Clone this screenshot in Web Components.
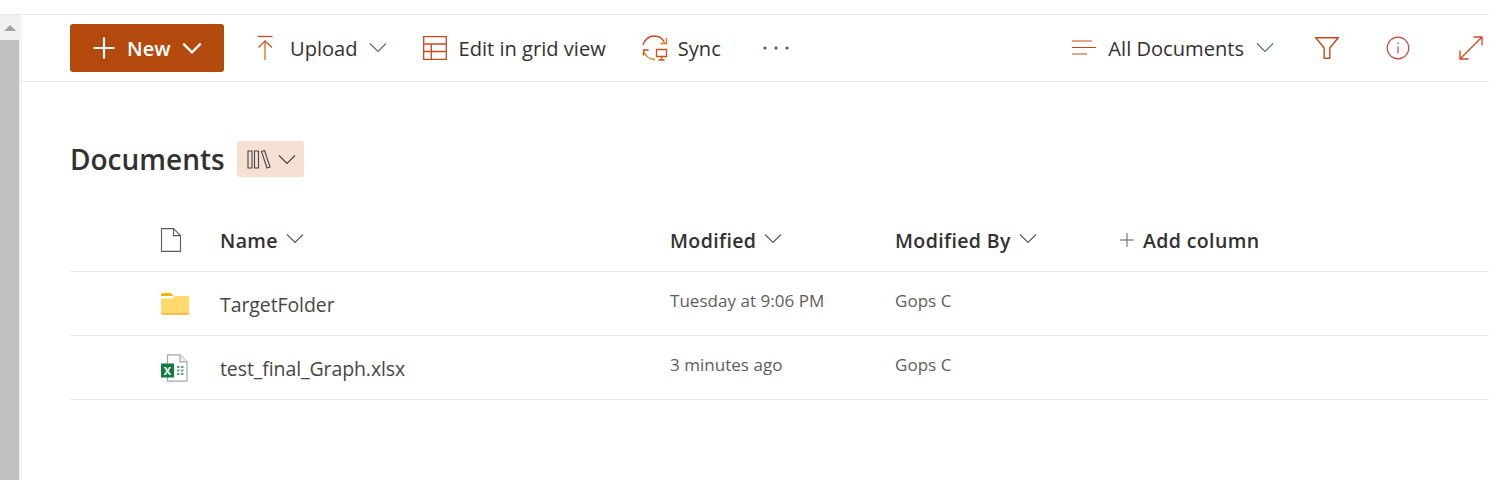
<!DOCTYPE html>
<html>
<head>
<meta charset="utf-8">
<title>Documents</title>
<style>
    html, body { margin: 0; height: 100%; overflow: hidden; background: #fff; }
    body { font-family: "Open Sans", "Noto Sans", sans-serif; color: #323130; }
</style>
</head>
<body>
<sp-app></sp-app>
<script>
const chevron = (w, color) => `<svg width="${w}" height="${Math.round(w * 0.6)}" viewBox="0 0 18 11" fill="none" stroke="${color}" stroke-width="1.2"><path d="M1 1.5 9 9.5 17 1.5"/></svg>`;

const icons = {
    plus: `<svg width="24" height="24" viewBox="0 0 24 24" stroke="#fff" stroke-width="2.2"><path d="M12 1.5v21M1.5 12h21"/></svg>`,
    upload: `<svg width="18" height="26" viewBox="0 0 18 26" fill="none"><path d="M2 1.5h14.5" stroke="#c8461c" stroke-width="1.3"/><path d="M9 25V6" stroke="#dc7a1e" stroke-width="1.4"/><path d="M2.5 12.5 9.2 5.8l6.7 6.7" stroke="#c8521c" stroke-width="1.3"/></svg>`,
    grid: `<svg width="24" height="24" viewBox="0 0 24 24" fill="none" stroke="#c8481c" stroke-width="1.3"><path d="M.7.7h22.6v22.6H.7zM.7 8h22.6M.7 15.5h22.6M8.3 8v15.3"/></svg>`,
    sync: `<svg width="26" height="26" viewBox="0 0 26 26" fill="none" stroke-width="1.3"><path d="M1 10C3 4.500 7.500 1 12.500 1c4.500 0 8 2.200 10 6.500" stroke="#c8481c"/><path d="M24.500 3v5.500H18.500" stroke="#dc7a1e"/><path d="M6.500 15H1.500v5.500" stroke="#c8481c"/><path d="M1.500 15.500C3 21 7.500 24.500 13 24.500" stroke="#dc7a1e"/><path d="M14.500 14.500h10v7h-10zM19.500 21.500v3.500M16.500 25h6" stroke="#c8521c"/></svg>`,
    more: `<svg width="26" height="6" viewBox="0 0 26 6" fill="#44546a"><circle cx="2" cy="3" r="1.500"/><circle cx="13" cy="3" r="1.500"/><circle cx="24" cy="3" r="1.500"/></svg>`,
    view: `<svg width="24" height="16" viewBox="0 0 24 16" fill="none" stroke="#c8481c" stroke-width="1.2"><path d="M0 1h20M0 7.500h24M0 14h15"/></svg>`,
    filter: `<svg width="24" height="22" viewBox="0 0 24 22" fill="none" stroke="#c8481c" stroke-width="1.4"><path d="M.8.8h22.400L14.800 11v10.200H9.200V11z"/></svg>`,
    info: `<svg width="24" height="24" viewBox="0 0 24 24" fill="none" stroke="#c8483c" stroke-width="1.2"><circle cx="12" cy="12" r="10.800"/><path d="M12 10.500v7M12 6.500v1.800" stroke="#d04a6a" stroke-width="1.300"/></svg>`,
    expand: `<svg width="24" height="24" viewBox="0 0 24 24" fill="none" stroke="#c8481c" stroke-width="1.300"><path d="M1 23 23 1M14.500 1H23v8.500M1 14.500V23h8.500"/></svg>`,
    library: `<svg width="24" height="19" viewBox="0 0 24 19" fill="none" stroke="#4a4644" stroke-width="1.100"><path d="M1 1h4v17H1zM7.500 1h4v17h-4zM14.500 1.500 17.500.5l5.500 16.500-3 1z"/></svg>`,
    page: `<svg width="22" height="24" viewBox="0 0 22 24" fill="none" stroke="#5c5a58" stroke-width="1.100"><path d="M1.500.6h12l7 7V23.400h-19zM13.500.6v7h7"/></svg>`,
    folder: `<svg width="30" height="23" viewBox="0 0 30 23"><path d="M1 3C1 1.800 1.800 1 3 1h7.500l3 3H1z" fill="#f5b400"/><path d="M1 6.500h11l3-2.500h12.500c1 0 1.700.8 1.700 1.700V21c0 1-.7 1.700-1.700 1.700H2.700C1.700 22.700 1 22 1 21z" fill="#ffd96e"/><path d="M1 21.200h28.200V21c0 1-.7 1.700-1.700 1.700H2.700C1.700 22.700 1 22 1 21z" fill="#f0b63c"/></svg>`,
    excel: `<svg width="28" height="28" viewBox="0 0 28 28"><path d="M7.500 .8h12.500l7 7V27.200h-19.500z" fill="#fff" stroke="#a8a6a4" stroke-width="1.200"/><path d="M20 .8v7h7" fill="#f0f0f0" stroke="#a8a6a4" stroke-width="1.200"/><path d="M17 12h2.500v2H17zM21 12h2.500v2H21zM17 15.500h2.500v2H17zM21 15.500h2.500v2H21zM17 19h2.500v2H17zM21 19h2.500v2H21z" fill="#5ea67e"/><rect x="1" y="9.500" width="13" height="14" fill="#107c41"/><text x="7.500" y="20.500" font-family="Open Sans, sans-serif" font-size="11" font-weight="700" fill="#fff" text-anchor="middle">X</text></svg>`
};

const commandTemplate = document.createElement('template');
commandTemplate.innerHTML = `
    <style>
        :host {
            display: inline-flex;
            align-items: center;
            height: 48px;
            font-size: 20.100px;
            color: #323130;
            white-space: nowrap;
        }
        .icon { display: flex; align-items: center; justify-content: center; }
        .label { display: block; }
        .chev { display: flex; align-items: center; position: relative; top: -1px; }
        ::slotted(span) { display: flex; align-items: center; }
    </style>
    <span class='icon'><slot name='icon'></slot></span>
    <span class='label'><slot></slot></span>
    <span class='chev'><slot name='chevron'></slot></span>
`;
class SpCommand extends HTMLElement {
    constructor() {
        super();
        this.attachShadow({ mode: 'open' });
        this.shadowRoot.appendChild(commandTemplate.content.cloneNode(true));
        const gap = this.getAttribute('gap') || '0';
        this.shadowRoot.querySelector('.icon').style.marginRight = gap + 'px';
        const chevGap = this.getAttribute('chevgap') || '0';
        this.shadowRoot.querySelector('.chev').style.marginLeft = chevGap + 'px';
    }
}

const barTemplate = document.createElement('template');
barTemplate.innerHTML = `
    <style>
        :host {
            display: flex;
            align-items: center;
            height: 66px;
            padding: 0 0 0 48px;
            border-top: 1px solid #e8e8e8;
            border-bottom: 1px solid #e8e8e8;
            overflow: hidden;
        }
        .new {
            display: flex;
            align-items: center;
            box-sizing: border-box;
            width: 154px;
            height: 48px;
            padding-left: 22px;
            margin-right: 32px;
            background: #b54a0e;
            border-radius: 3px;
            color: #fff;
            font-size: 20px;
            font-weight: 600;
        }
        .new span { margin: 0 11px 0 11px; }
        .new svg { flex: none; }
        .spacer { flex: 1; }
        sp-command { flex: none; }
    </style>
    <div class='new'>${icons.plus}<span>New</span>${chevron(20, '#fff').replace('stroke-width="1.2"', 'stroke-width="2"')}</div>
    <sp-command gap='16' chevgap='11' style='margin-right:36px'><span slot='icon'>${icons.upload}</span>Upload<span slot='chevron'>${chevron(18, '#5a6a7a')}</span></sp-command>
    <sp-command gap='12' style='margin-right:36px'><span slot='icon'>${icons.grid}</span>Edit in grid view</sp-command>
    <sp-command gap='10' style='margin-right:42px'><span slot='icon'>${icons.sync}</span>Sync</sp-command>
    <sp-command><span slot='icon'>${icons.more}</span></sp-command>
    <div class='spacer'></div>
    <sp-command gap='12' chevgap='12' style='margin-right:41px'><span slot='icon'>${icons.view}</span>All Documents<span slot='chevron'>${chevron(18, '#5a6a7a')}</span></sp-command>
    <sp-command style='margin-right:47px'><span slot='icon'>${icons.filter}</span></sp-command>
    <sp-command style='margin-right:49px'><span slot='icon'>${icons.info}</span></sp-command>
    <sp-command style='margin-right:6px'><span slot='icon'>${icons.expand}</span></sp-command>
`;
class SpCommandBar extends HTMLElement {
    constructor() {
        super();
        this.attachShadow({ mode: 'open' });
        this.shadowRoot.appendChild(barTemplate.content.cloneNode(true));
    }
}

const titleTemplate = document.createElement('template');
titleTemplate.innerHTML = `
    <style>
        :host {
            display: flex;
            align-items: center;
            gap: 12px;
            height: 36px;
            padding: 59px 0 0 48px;
        }
        h1 {
            margin: 0;
            font-size: 28px;
            font-weight: 600;
            color: #323130;
        }
        .switch {
            display: flex;
            align-items: center;
            gap: 7px;
            box-sizing: border-box;
            width: 67px;
            height: 36px;
            padding-left: 10px;
            background: #f6dfd3;
            border-radius: 3px;
        }
    </style>
    <h1><slot></slot></h1>
    <div class='switch'>${icons.library}${chevron(18, '#4a4644')}</div>
`;
class SpDocTitle extends HTMLElement {
    constructor() {
        super();
        this.attachShadow({ mode: 'open' });
        this.shadowRoot.appendChild(titleTemplate.content.cloneNode(true));
    }
}

const rowStyles = `
    :host {
        display: grid;
        grid-template-columns: 150px 450px 225px 224px 1fr;
        align-items: center;
        box-sizing: border-box;
        border-bottom: 1px solid #edebe9;
    }
    .icon { display: flex; align-items: center; padding-left: 90px; }
`;

const headTemplate = document.createElement('template');
headTemplate.innerHTML = `
    <style>
        ${rowStyles}
        :host {
            height: 63px;
            font-size: 19.500px;
            font-weight: 600;
            letter-spacing: 0.380px;
            color: #323130;
        }
        .col { display: flex; align-items: center; gap: 8px; white-space: nowrap; }
        .col svg { position: relative; top: -2px; }
        .add { gap: 8px; }
        .add svg { top: 0; }
    </style>
    <div class='icon'>${icons.page}</div>
    <div class='col'>Name ${chevron(18, '#5c5a58')}</div>
    <div class='col'>Modified ${chevron(18, '#5c5a58')}</div>
    <div class='col'>Modified By ${chevron(18, '#5c5a58')}</div>
    <div class='col add'><svg width="16" height="16" viewBox="0 0 16 16" stroke="#605e5c" stroke-width="1"><path d="M8 1v14M1 8h14"/></svg>Add column</div>
`;
class SpListHead extends HTMLElement {
    constructor() {
        super();
        this.attachShadow({ mode: 'open' });
        this.shadowRoot.appendChild(headTemplate.content.cloneNode(true));
    }
}

const rowTemplate = document.createElement('template');
rowTemplate.innerHTML = `
    <style>
        ${rowStyles}
        :host { height: 64px; }
        .name { font-size: 19.500px; letter-spacing: -0.090px; color: #484644; position: relative; top: 1px; }
        .meta { font-size: 17px; letter-spacing: 0.030px; color: #605e5c; position: relative; top: -3px; white-space: nowrap; }
    </style>
    <div class='icon'><slot name='icon'></slot></div>
    <div class='name'></div>
    <div class='meta modified'></div>
    <div class='meta by'></div>
`;
class SpListRow extends HTMLElement {
    constructor() {
        super();
        this.attachShadow({ mode: 'open' });
        this.shadowRoot.appendChild(rowTemplate.content.cloneNode(true));
    }

    connectedCallback() {
        this.shadowRoot.querySelector('.name').textContent = this.getAttribute('name');
        this.shadowRoot.querySelector('.modified').textContent = this.getAttribute('modified');
        this.shadowRoot.querySelector('.by').textContent = this.getAttribute('by');
    }
}

const scrollTemplate = document.createElement('template');
scrollTemplate.innerHTML = `
    <style>
        :host {
            display: flex;
            flex-direction: column;
            flex: none;
            box-sizing: border-box;
            width: 22px;
            margin-top: 14px;
            padding-right: 3px;
            background: #f1f1f1;
            border-top: 1px solid #e8e8e8;
            box-shadow: inset -2px 0 0 #f4f4f4;
        }
        .arrow { display: flex; justify-content: center; height: 25px; padding-top: 10px; box-sizing: border-box; }
        .thumb { flex: 1; background: #c1c1c1; }
    </style>
    <div class='arrow'><svg width="12" height="6" viewBox="0 0 12 6"><path d="M6 0 12 6H0z" fill="#a3a3a3"/></svg></div>
    <div class='thumb'></div>
`;
class SpScrollbar extends HTMLElement {
    constructor() {
        super();
        this.attachShadow({ mode: 'open' });
        this.shadowRoot.appendChild(scrollTemplate.content.cloneNode(true));
    }
}

const appTemplate = document.createElement('template');
appTemplate.innerHTML = `
    <style>
        :host { display: flex; height: 480px; width: 1489px; overflow: hidden; }
        main { flex: 1; min-width: 0; padding-top: 14px; }
        sp-list-head { margin: 14px 0 0 48px; }
        sp-list-row { margin-left: 48px; }
    </style>
    <sp-scrollbar></sp-scrollbar>
    <main>
        <sp-command-bar></sp-command-bar>
        <sp-doc-title>Documents</sp-doc-title>
        <div style='height:18px'></div>
        <sp-list-head></sp-list-head>
        <sp-list-row name='TargetFolder' modified='Tuesday at 9:06 PM' by='Gops C'><span slot='icon' style='display:flex'>${icons.folder}</span></sp-list-row>
        <sp-list-row name='test_final_Graph.xlsx' modified='3 minutes ago' by='Gops C'><span slot='icon' style='display:flex'>${icons.excel}</span></sp-list-row>
    </main>
`;
class SpApp extends HTMLElement {
    constructor() {
        super();
        this.attachShadow({ mode: 'open' });
        this.shadowRoot.appendChild(appTemplate.content.cloneNode(true));
    }
}

window.customElements.define('sp-command', SpCommand);
window.customElements.define('sp-command-bar', SpCommandBar);
window.customElements.define('sp-doc-title', SpDocTitle);
window.customElements.define('sp-list-head', SpListHead);
window.customElements.define('sp-list-row', SpListRow);
window.customElements.define('sp-scrollbar', SpScrollbar);
window.customElements.define('sp-app', SpApp);
</script>
</body>
</html>
